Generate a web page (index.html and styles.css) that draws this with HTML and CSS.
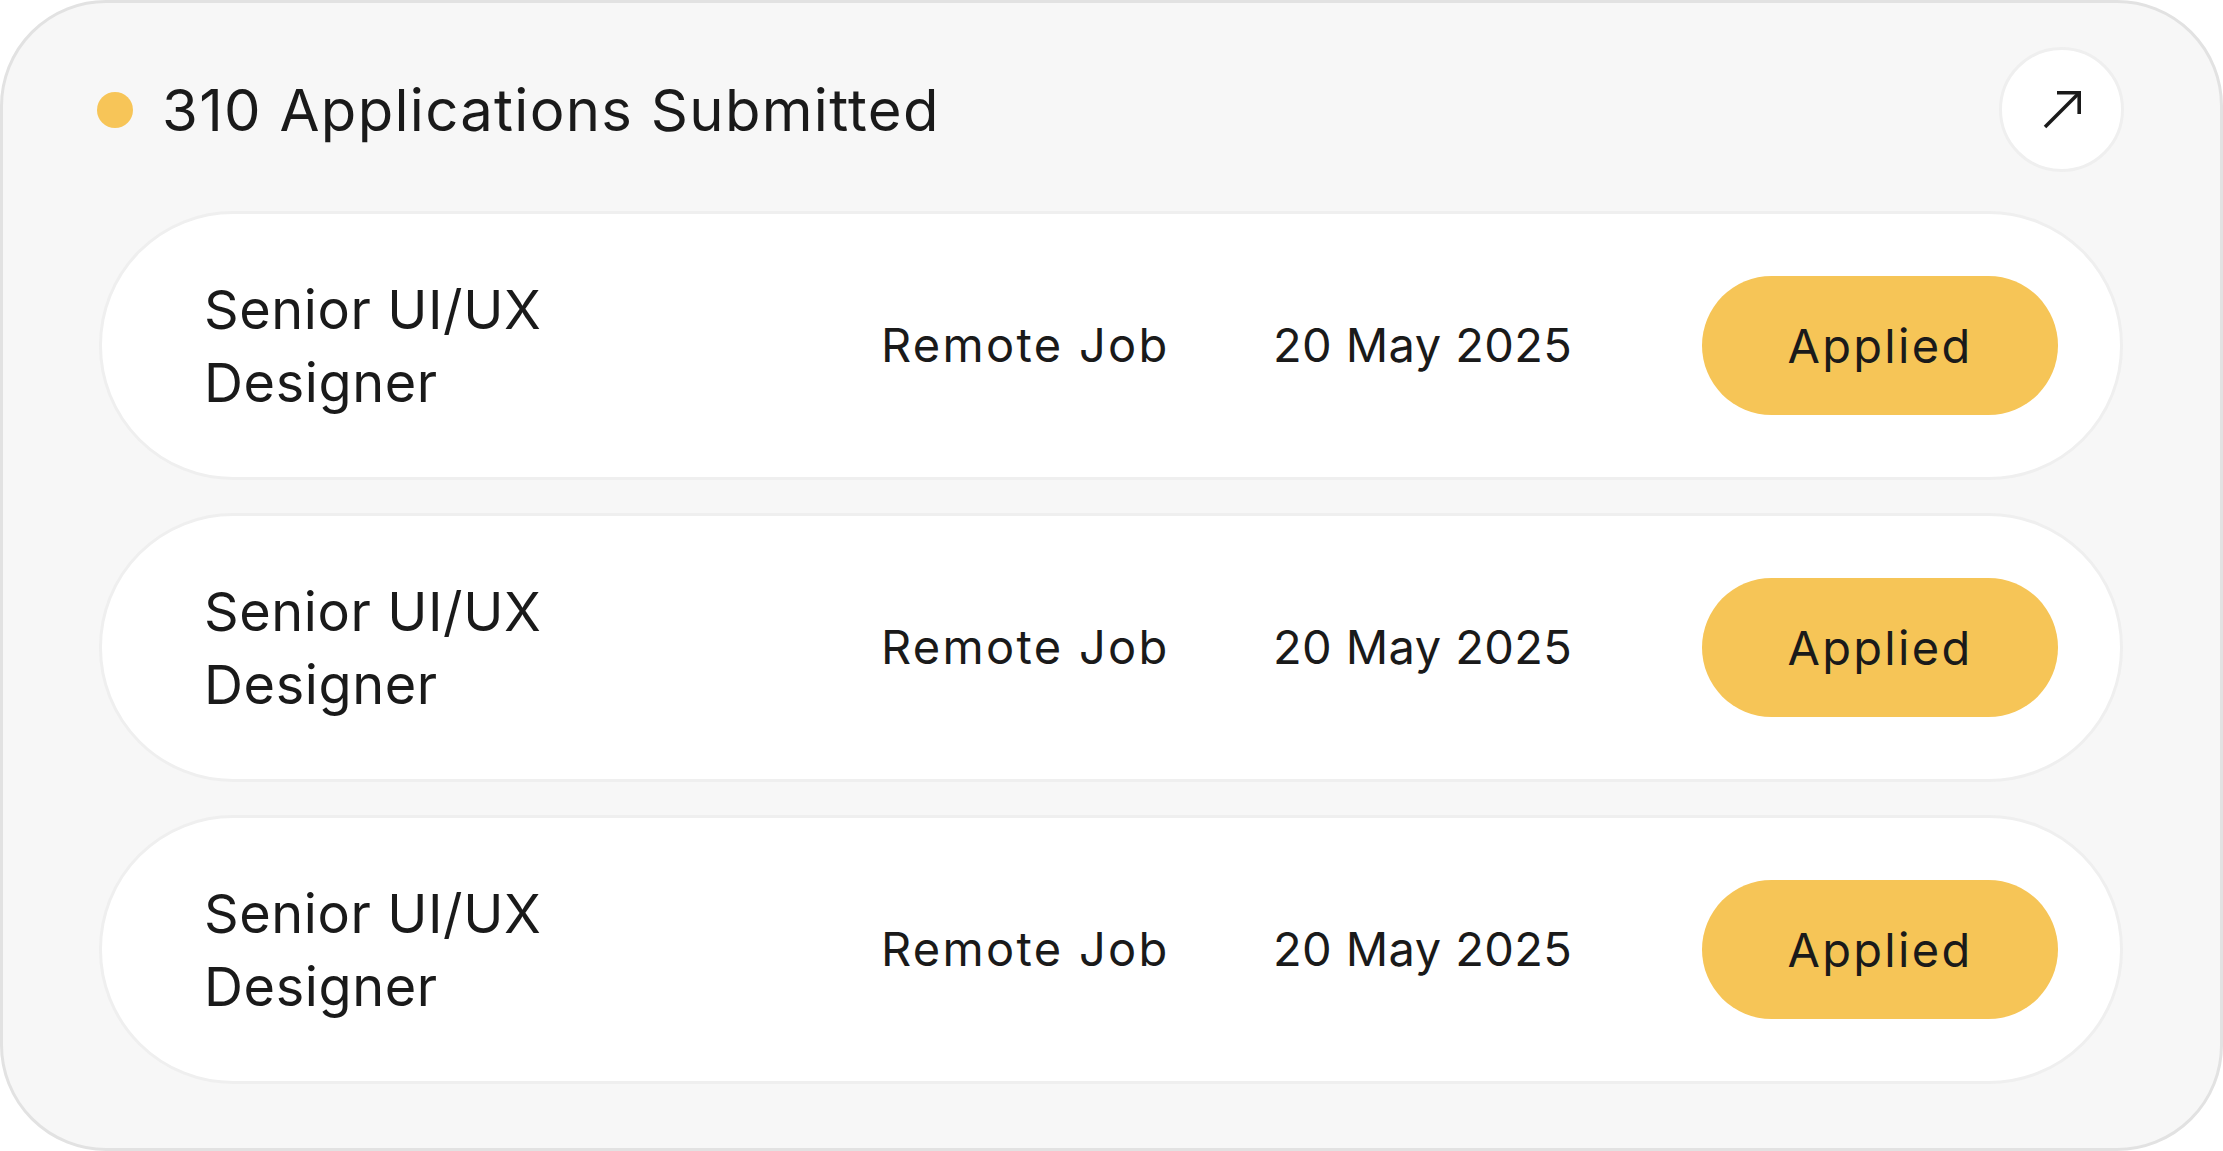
FILE: index.html
```html
<!DOCTYPE html>
<html lang="en">
<head>
<meta charset="utf-8">
<title>Applications</title>
<link rel="stylesheet" href="styles.css">
</head>
<body>
<div class="card">
  <header class="card-header">
    <div class="heading">
      <span class="dot"></span>
      <h1 class="title">310 Applications Submitted</h1>
    </div>
    <button class="open-btn" aria-label="Open">
      <svg width="48" height="48" viewBox="0 0 48 48" fill="none" stroke="#1a1a1a" stroke-width="3.6" stroke-linecap="butt" stroke-linejoin="miter">
        <line x1="7" y1="41" x2="41" y2="7"/>
        <polyline points="19,6.8 41.2,6.8 41.2,28"/>
      </svg>
    </button>
  </header>
  <div class="rows">
    <div class="row">
      <div class="job-title">Senior UI/UX Designer</div>
      <div class="cell remote">Remote Job</div>
      <div class="cell date">20 May 2025</div>
      <div class="status">Applied</div>
    </div>
    <div class="row">
      <div class="job-title">Senior UI/UX Designer</div>
      <div class="cell remote">Remote Job</div>
      <div class="cell date">20 May 2025</div>
      <div class="status">Applied</div>
    </div>
    <div class="row">
      <div class="job-title">Senior UI/UX Designer</div>
      <div class="cell remote">Remote Job</div>
      <div class="cell date">20 May 2025</div>
      <div class="status">Applied</div>
    </div>
  </div>
</div>
</body>
</html>
```
FILE: styles.css
```css
* { box-sizing: border-box; }
html, body { margin: 0; padding: 0; background: #ffffff; }
body {
  font-family: "Inter", "Open Sans", sans-serif;
  color: #1a1a1a;
}
.card {
  width: 2223px;
  height: 1151px;
  background: #f7f7f7;
  border: 3px solid #e2e2e2;
  border-radius: 106px;
  padding: 44px 97px 0 96px;
  display: flex;
  flex-direction: column;
  gap: 39px;
}
.card-header {
  height: 125px;
  display: flex;
  align-items: center;
  justify-content: space-between;
}
.heading {
  display: flex;
  align-items: center;
  gap: 29px;
}
.dot {
  width: 36px;
  height: 36px;
  border-radius: 50%;
  background: #f7c558;
  flex: none;
  margin-left: -2px;
}
.title {
  margin: 0;
  font-size: 58px;
  font-weight: 400;
  line-height: 1;
  letter-spacing: 1.3px;
}
.open-btn {
  width: 125px;
  height: 125px;
  border-radius: 50%;
  background: #ffffff;
  border: 3px solid #efefef;
  display: flex;
  align-items: center;
  justify-content: center;
  padding: 0;
  margin-right: -1px;
}
.rows {
  display: flex;
  flex-direction: column;
  gap: 33px;
}
.row {
  height: 269px;
  background: #ffffff;
  border: 3px solid #efefef;
  border-radius: 134px;
  padding: 0 62px 0 102px;
  display: grid;
  grid-template-columns: 677px 392px 429px 356px;
  align-items: center;
}
.job-title {
  font-size: 54px;
  line-height: 73px;
  max-width: 420px;
  letter-spacing: 0.6px;
}
.cell {
  font-size: 47px;
  line-height: 1.2;
}
.remote { letter-spacing: 2.3px; }
.date { letter-spacing: 0.4px; }
.status {
  height: 139px;
  border-radius: 70px;
  background: #f6c557;
  display: flex;
  align-items: center;
  justify-content: center;
  font-size: 47px;
  letter-spacing: 2.3px;
}
```
